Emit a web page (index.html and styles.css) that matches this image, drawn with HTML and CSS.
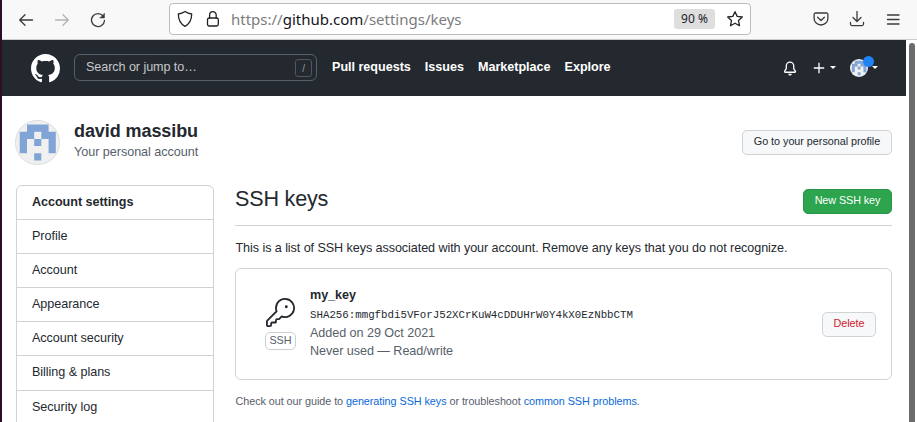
FILE: index.html
```html
<!DOCTYPE html>
<html lang="en">
<head>
<meta charset="utf-8">
<title>SSH keys</title>
<link rel="stylesheet" href="styles.css">
</head>
<body>
<div class="window">
  <div class="toolbar">
    <svg class="tool back" width="16" height="16" viewBox="0 0 16 16"><path d="M14.500 8H1.800M7 2.800L1.700 8 7 13.200"/></svg>
    <svg class="tool forward" width="16" height="16" viewBox="0 0 16 16"><path d="M1.500 8h12.700M9 2.800L14.300 8 9 13.200"/></svg>
    <svg class="tool reload" width="16" height="16" viewBox="0 0 16 16"><path d="M13.200 4.200A6.500 6.500 0 1 0 14.500 8.500"/><path class="solid" d="M14.500 1.500v4.500H10z"/></svg>
    <div class="address">
      <svg class="tool shield" width="16" height="18" viewBox="0 0 16 18"><path d="M8 1.500C10 3 12.500 3.800 14.700 4c0 5.500-2 9.700-6.700 12.400C3.300 13.700 1.300 9.500 1.300 4 3.500 3.800 6 3 8 1.500z"/></svg>
      <svg class="tool lock" width="14" height="18" viewBox="0 0 14 18"><rect x="1.500" y="8" width="10.800" height="8" rx="1.700"/><path d="M3.600 8V5a3.300 3.300 0 0 1 6.600 0v3"/></svg>
      <div class="url">https://<b>github.com</b>/settings/keys</div>
      <div class="zoom">90 %</div>
      <svg class="tool star" width="18" height="18" viewBox="0 0 18 18"><path d="M9 1.700l2.200 4.700 5.100.6-3.800 3.500 1 5.200L9 13.200l-4.500 2.500 1-5.200L1.700 7l5.100-.6z"/></svg>
    </div>
    <svg class="tool pocket" width="16" height="16" viewBox="0 0 16 16"><path d="M2.500 2h11a1.400 1.400 0 0 1 1.400 1.400V7.500a6.900 6.500 0 0 1-13.800 0V3.400A1.400 1.400 0 0 1 2.500 2zM4.600 6.300L8 9.500l3.400-3.200"/></svg>
    <svg class="tool download" width="16" height="16" viewBox="0 0 16 16"><path d="M8 .5v10M4 6.500l4 4 4-4M1.500 11.500v1.600a1.500 1.500 0 0 0 1.500 1.500h10a1.500 1.500 0 0 0 1.500-1.500v-1.600"/></svg>
    <svg class="tool menu" width="14" height="14" viewBox="0 0 14 14"><path d="M1.500 2h11.500M1.500 6.500h11.500M1.500 11h11.500"/></svg>
  </div>
  <div class="viewport">
    <div class="page">
      <header class="header">
        <svg class="logo" width="29" height="29" viewBox="0 0 16 16"><path d="M8 0C3.580 0 0 3.580 0 8c0 3.540 2.290 6.530 5.470 7.590.4.070.55-.17.55-.38 0-.19-.01-.82-.01-1.490-2.010.37-2.530-.49-2.690-.94-.09-.23-.48-.94-.82-1.130-.28-.15-.68-.52-.01-.53.63-.01 1.080.58 1.230.82.720 1.210 1.870.87 2.330.66.070-.52.280-.87.510-1.070-1.780-.2-3.640-.89-3.640-3.950 0-.87.310-1.590.82-2.150-.08-.2-.36-1.020.08-2.120 0 0 .67-.21 2.200.82.640-.18 1.320-.27 2-.27s1.360.09 2 .27c1.530-1.040 2.200-.82 2.200-.82.440 1.100.160 1.920.080 2.120.510.560.820 1.270.820 2.150 0 3.070-1.870 3.750-3.650 3.950.290.250.540.730.540 1.480 0 1.070-.010 1.930-.010 2.200 0 .210.150.460.550.380A8.013 8.013 0 0 0 16 8c0-4.420-3.580-8-8-8z"/></svg>
        <div class="search"><span>Search or jump to…</span><span class="slash">/</span></div>
        <nav class="nav"><a>Pull requests</a><a>Issues</a><a>Marketplace</a><a>Explore</a></nav>
        <svg class="bell" width="14" height="15" viewBox="0 0 16 16"><path d="M8 16a2 2 0 0 0 1.985-1.750c.017-.137-.097-.25-.235-.25h-3.500c-.138 0-.252.113-.235.25A2 2 0 0 0 8 16z"/><path fill-rule="evenodd" d="M8 1.500A3.500 3.500 0 0 0 4.500 5v2.947c0 .346-.102.683-.294.970l-1.703 2.556a.018.018 0 0 0-.003.010l.001.006c0 .002.002.004.004.006a.017.017 0 0 0 .006.004l.007.001h10.964l.007-.001a.016.016 0 0 0 .006-.004.016.016 0 0 0 .004-.006l.001-.007a.017.017 0 0 0-.003-.010l-1.703-2.554a1.750 1.750 0 0 1-.294-.970V5A3.500 3.500 0 0 0 8 1.500zM3 5a5 5 0 0 1 10 0v2.947c0 .05.015.098.042.139l1.703 2.555A1.518 1.518 0 0 1 13.482 13H2.518a1.518 1.518 0 0 1-1.263-2.360l1.703-2.554A.25.25 0 0 0 3 7.947V5z"/></svg>
        <svg class="plus" width="12" height="12" viewBox="0 0 12 12"><path d="M6 .8v10.400M.8 6h10.400"/></svg>
        <i class="caret"></i>
        <div class="mini">
          <svg width="18" height="18" viewBox="0 0 45 45"><use href="#identicon"/></svg>
          <i class="dot"></i>
        </div>
        <i class="caret last"></i>
      </header>
      <section class="profile">
        <svg class="avatar" width="45" height="45" viewBox="0 0 45 45">
          <defs><clipPath id="round"><circle cx="22.500" cy="22.500" r="22.500"/></clipPath>
          <g id="identicon" clip-path="url(#round)"><path fill="#f0f0f0" d="M0 0h45v45H0z"/><path fill="#80a4d5" fill-rule="evenodd" d="M12 4.500h21.600v7.200h7.200v21.600h-7.200V19H12v14.300H4.700V11.700H12zM19.200 11.800h7.100V19h-7.100zM19.200 19h7.100v7.100h-7.100zM19.200 33.300h7.100v7.100h-7.100z"/></g></defs>
          <use href="#identicon"/><circle cx="22.500" cy="22.500" r="22" fill="none" stroke="#dcdedf"/>
        </svg>
        <div class="who"><h1>david massibu</h1><p>Your personal account</p></div>
        <button class="btn goto">Go to your personal profile</button>
      </section>
      <div class="columns">
        <aside class="side">
          <a class="current">Account settings</a><a>Profile</a><a>Account</a><a>Appearance</a><a>Account security</a><a>Billing &amp; plans</a><a>Security log</a>
        </aside>
        <main class="main">
          <div class="title"><h2>SSH keys</h2><button class="btn green">New SSH key</button></div>
          <p class="intro">This is a list of SSH keys associated with your account. Remove any keys that you do not recognize.</p>
          <div class="card">
            <div class="kind">
              <svg width="29" height="29" viewBox="0 0 24 24"><circle cx="16.800" cy="7.200" r="1.200"/><path fill-rule="evenodd" d="M15.750 0a8.250 8.250 0 0 0-7.851 10.790L.513 18.178A1.750 1.750 0 0 0 0 19.414v2.836C0 23.217.784 24 1.750 24h1.500A1.750 1.750 0 0 0 5 22.250v-1a.25.25 0 0 1 .25-.25h2.735a.75.75 0 0 0 .545-.22l.214-.213A.875.875 0 0 0 9 19.948V18.500a.25.25 0 0 1 .25-.25h1.086c.464 0 .910-.184 1.237-.513l1.636-1.636A8.250 8.250 0 1 0 15.750 0zM9 8.250a6.750 6.750 0 1 1 4.288 6.287.75.75 0 0 0-.804.168l-1.970 1.970a.25.25 0 0 1-.178.075H9.250A1.750 1.750 0 0 0 7.500 18.500v1H5.250a1.750 1.750 0 0 0-1.750 1.750v1a.25.25 0 0 1-.25.25h-1.500a.25.25 0 0 1-.25-.25v-2.836a.25.25 0 0 1 .073-.177l7.722-7.721a.75.75 0 0 0 .168-.804A6.730 6.730 0 0 1 9 8.250z"/></svg>
              <span>SSH</span>
            </div>
            <div class="info"><strong>my_key</strong><code>SHA256:mmgfbdi5VForJ52XCrKuW4cDDUHrW0Y4kX0EzNbbCTM</code><p>Added on 29 Oct 2021</p><p>Never used — Read/write</p></div>
            <button class="btn delete">Delete</button>
          </div>
          <p class="guide">Check out our guide to <a>generating SSH keys</a> or troubleshoot <a>common SSH problems</a>.</p>
        </main>
      </div>
    </div>
    <div class="scroll"><i></i></div>
  </div>
</div>
</body>
</html>
```
FILE: styles.css
```css
* { box-sizing: border-box; }
body { margin: 0; background: #fff; color: #24292f; font: 12.6px/18px "Liberation Sans", sans-serif; overflow: hidden; }
h1, h2, p { margin: 0; font-weight: 400; }
svg { display: block; flex: none; }
.window { height: 422px; border-left: 2px solid #2c0f22; display: flex; flex-direction: column; overflow: hidden; }

.toolbar { height: 40px; flex: none; background: #f8f8f8; border-bottom: 1px solid #ccc; display: flex; align-items: center; padding-left: 16px; }
.tool { fill: none; stroke: #3a393e; stroke-width: 1.3; stroke-linecap: round; stroke-linejoin: round; }
.tool .solid { fill: #3a393e; stroke-width: .5; }
.forward { stroke: #b3b3b3; margin-left: 20px; }
.reload { margin-left: 20px; }
.address { width: 582px; height: 32px; margin-left: 63px; margin-top: -1px; background: #fff; border: 1px solid #bcbcb8; border-radius: 4px; display: flex; align-items: center; padding-left: 7px; }
.shield, .lock, .star { stroke: #222226; }
.lock { margin-left: 13px; }
.url { margin-left: 11px; width: 443px; font: 15px/20px "Noto Sans", sans-serif; color: #7b7b7e; white-space: nowrap; }
.url b { font-weight: 400; color: #15141a; }
.zoom { width: 41px; height: 20px; border-radius: 3px; background: #dededf; font: 12px/20px "Noto Sans", sans-serif; text-align: center; color: #222226; }
.star { margin-left: 11px; }
.pocket { margin-left: 62px; margin-top: -2px; }
.download { margin-left: 20px; margin-top: -2px; }
.menu { margin-left: 21px; }

.viewport { flex: 1; display: flex; min-height: 0; }
.page { width: 904px; flex: none; overflow: hidden; }
.scroll { flex: 1; padding: 3px 0 0 3px; }
.scroll i { display: block; width: 6px; height: 500px; background: #6b6b6b; border-radius: 3px; }

.header { height: 56px; background: #24292f; display: flex; align-items: center; padding-left: 29px; color: #fff; }
.logo { fill: #fff; }
.search { width: 243px; height: 27px; margin-left: 14px; margin-top: -1px; border: 1px solid #57606a; border-radius: 6px; display: flex; align-items: center; justify-content: space-between; padding: 0 4px 2px 11px; color: #c4c8cb; letter-spacing: -.07px; }
.slash { width: 17px; height: 18px; margin-top: 3px; border: 1px solid #50575f; border-radius: 3px; font-size: 10px; line-height: 17px; text-align: center; color: #9299a0; }
.nav { display: flex; gap: 14px; margin: -3px 0 0 15px; width: 451px; font-weight: 700; letter-spacing: -.02px; }
.bell { fill: #fff; }
.plus { margin-left: 16px; stroke: #fff; stroke-width: 1.3; }
.caret { margin-left: 5px; margin-top: -2px; border: 3px solid transparent; border-top-color: #fff; border-bottom: 0; }
.mini { position: relative; margin-left: 14px; }
.dot { position: absolute; left: 13px; top: -3px; width: 11px; height: 11px; border-radius: 50%; background: #1f83f5; }
.caret.last { margin-left: 4px; }

.profile { height: 89px; padding: 0 14px 0 13px; display: flex; align-items: flex-start; }
.avatar { margin-top: 24px; }
.who { margin: 24px auto 0 14px; }
.who h1 { font-size: 18px; line-height: 23px; font-weight: 700; letter-spacing: -.08px; }
.who p { color: #57606a; line-height: 18px; letter-spacing: -.03px; }
.btn { font: 10.8px/18px "Liberation Sans", sans-serif; height: 25px; border: 1px solid #d0d3d5; border-radius: 5px; background: #f6f8fa; color: #24292f; padding: 0 0 3px; text-align: center; white-space: nowrap; }
.goto { width: 150px; margin-top: 34px; letter-spacing: -.03px; }
.green { width: 89px; background: #2da44e; border-color: #299347; color: #fff; margin-top: 4px; letter-spacing: -.08px; }
.delete { width: 54px; color: #cf222e; }

.columns { display: flex; align-items: flex-start; padding: 0 14px; }
.side { width: 198px; height: 300px; border: 1px solid #d0d3d5; border-radius: 6px; letter-spacing: -.05px; }
.side a { display: block; height: 34.1px; padding: 7px 15px; border-bottom: 1px solid #d0d3d5; }
.side .current { font-weight: 700; }
.main { width: 657px; margin-left: 21px; }
.title { height: 41px; border-bottom: 1px solid #d0d3d5; display: flex; justify-content: space-between; align-items: flex-start; }
.title h2 { font-size: 21.6px; line-height: 28px; letter-spacing: -.2px; }
.intro { margin-top: 13px; padding-left: .5px; white-space: nowrap; letter-spacing: -.075px; }
.card { height: 112px; margin-top: 11px; border: 1px solid #d0d3d5; border-radius: 6px; display: flex; align-items: center; padding: 0 15px 0 29px; }
.kind { width: 31px; margin-top: -2px; }
.kind svg { margin: 2px 0 5px 1px; fill: #24292f; }
.kind span { display: block; height: 18px; border: 1px solid #c8d0d4; border-radius: 5px; color: #57606a; font-size: 10.8px; line-height: 15px; text-align: center; }
.info { margin: -3px auto 0 14px; color: #57606a; letter-spacing: -.05px; }
.info strong, .info code { display: block; color: #24292f; }
.info code { font: 10.8px/20px "Liberation Mono", monospace; letter-spacing: -.02px; padding-top: 1px; height: 20px; }
.guide { margin-top: 12px; padding-left: .5px; font-size: 10.8px; color: #57606a; white-space: nowrap; letter-spacing: -.05px; }
.guide a { color: #0969da; }
```
